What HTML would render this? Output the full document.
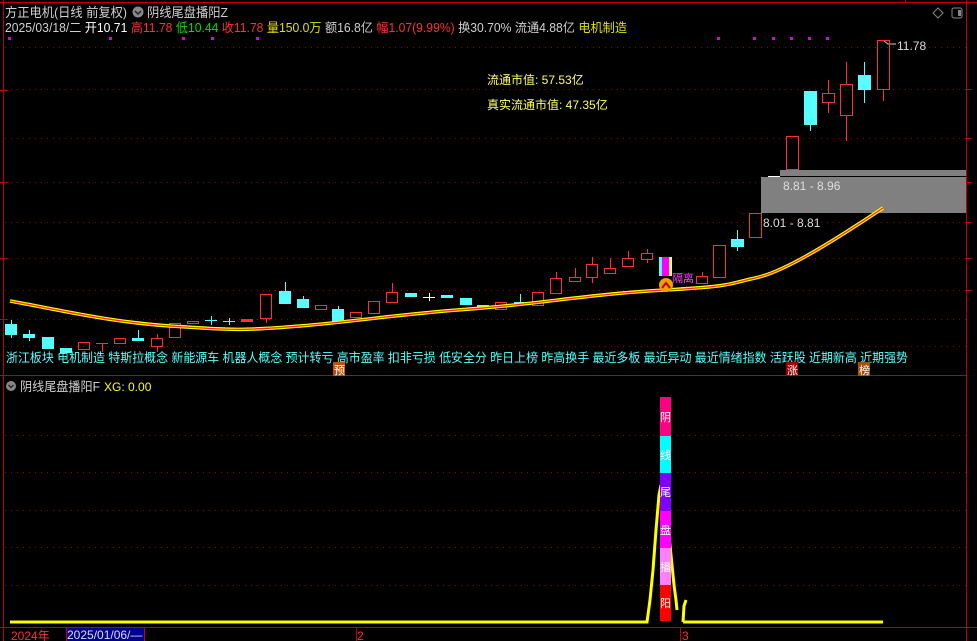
<!DOCTYPE html>
<html><head><meta charset="utf-8"><style>
html,body{margin:0;padding:0;background:#000;width:977px;height:641px;overflow:hidden}
svg{display:block}
text{font-family:"Liberation Sans","Noto Sans CJK SC",sans-serif}
</style></head><body>
<svg width="977" height="641" xmlns="http://www.w3.org/2000/svg">
<g stroke="#c00000" stroke-width="1">
<line x1="3.5" y1="0" x2="3.5" y2="641"/>
<line x1="966.5" y1="0" x2="966.5" y2="641"/>
<line x1="0" y1="2.5" x2="977" y2="2.5"/>
<line x1="905.5" y1="0" x2="905.5" y2="3"/>
<line x1="0" y1="375.5" x2="966" y2="375.5"/>
<line x1="0" y1="627.5" x2="977" y2="627.5"/>
<line x1="356.5" y1="627" x2="356.5" y2="641"/>
<line x1="680.5" y1="627" x2="680.5" y2="641"/>
</g>
<g stroke="#a00000" stroke-dasharray="1 5" stroke-width="1">
<line x1="5" y1="47.5" x2="966" y2="47.5"/>
<line x1="5" y1="89.5" x2="966" y2="89.5"/>
<line x1="5" y1="138.5" x2="966" y2="138.5"/>
<line x1="5" y1="182.5" x2="966" y2="182.5"/>
<line x1="5" y1="222.5" x2="966" y2="222.5"/>
<line x1="5" y1="258.5" x2="966" y2="258.5"/>
<line x1="5" y1="290.5" x2="966" y2="290.5"/>
<line x1="5" y1="319.5" x2="966" y2="319.5"/>
<line x1="5" y1="346.5" x2="966" y2="346.5"/>
<line x1="5" y1="435.5" x2="966" y2="435.5"/>
<line x1="5" y1="472.5" x2="966" y2="472.5"/>
<line x1="5" y1="510.5" x2="966" y2="510.5"/>
<line x1="5" y1="547.5" x2="966" y2="547.5"/>
<line x1="5" y1="585.5" x2="966" y2="585.5"/>
</g>
<g stroke="#c00000"><line x1="0" y1="90.5" x2="8" y2="90.5"/><line x1="0" y1="182.5" x2="8" y2="182.5"/><line x1="0" y1="258.5" x2="8" y2="258.5"/><line x1="0" y1="319.5" x2="8" y2="319.5"/>
<line x1="966" y1="89.5" x2="972" y2="89.5"/><line x1="966" y1="138.5" x2="972" y2="138.5"/><line x1="966" y1="182.5" x2="972" y2="182.5"/><line x1="966" y1="222.5" x2="972" y2="222.5"/><line x1="966" y1="258.5" x2="972" y2="258.5"/><line x1="966" y1="290.5" x2="972" y2="290.5"/></g>
<!-- header -->
<text x="5" y="17" font-size="13" fill="#d0d0d0" textLength="122" lengthAdjust="spacingAndGlyphs">方正电机(日线 前复权)</text>
<circle cx="138" cy="12" r="5.5" fill="#888"/><path d="M135 11l3 3 3-3" stroke="#222" fill="none" stroke-width="1.5"/>
<text x="147" y="17" font-size="13" fill="#d0d0d0" textLength="81" lengthAdjust="spacingAndGlyphs">阴线尾盘播阳Z</text>
<text x="5" y="32" font-size="12.5" textLength="622" lengthAdjust="spacingAndGlyphs"><tspan fill="#d0d0d0">2025/03/18/二 </tspan><tspan fill="#fff">开10.71 </tspan><tspan fill="#ff3030">高11.78 </tspan><tspan fill="#00e000">低10.44 </tspan><tspan fill="#ff3030">收11.78 </tspan><tspan fill="#e0e000">量150.0万 </tspan><tspan fill="#d0d0d0">额16.8亿 </tspan><tspan fill="#ff3030">幅1.07(9.99%) </tspan><tspan fill="#d0d0d0">换30.70% 流通4.88亿 </tspan><tspan fill="#e0e000">电机制造</tspan></text>
<path d="M938 8l5 5-5 5-5-5z" stroke="#888" fill="none"/>
<rect x="952" y="8" width="10" height="10" rx="2" stroke="#888" fill="none"/><rect x="958" y="10" width="3" height="6" fill="#888"/>
<g fill="#e000e0"><rect x="8" y="37" width="3" height="3"/><rect x="109" y="37" width="3" height="3"/><rect x="182" y="37" width="3" height="3"/><rect x="211" y="37" width="3" height="3"/><rect x="256" y="37" width="3" height="3"/><rect x="717" y="37" width="3" height="3"/><rect x="753" y="37" width="3" height="3"/><rect x="772" y="37" width="3" height="3"/><rect x="790" y="37" width="3" height="3"/><rect x="808" y="37" width="3" height="3"/><rect x="826" y="37" width="3" height="3"/></g>
<text x="487" y="84" font-size="12" fill="#ffff60">流通市值: 57.53亿</text>
<text x="487" y="109" font-size="12" fill="#ffff60">真实流通市值: 47.35亿</text>
<!-- gray boxes -->
<rect x="780" y="170" width="186" height="6" fill="#808080"/>
<rect x="761" y="177" width="205" height="36" fill="#808080"/>
<line x1="768" y1="176.5" x2="780" y2="176.5" stroke="#fff"/>
<text x="783" y="190" font-size="12" fill="#ddd">8.81 - 8.96</text>
<text x="763" y="227" font-size="12" fill="#ddd">8.01 - 8.81</text>
<text x="897" y="50" font-size="12" fill="#ddd">11.78</text>
<path d="M884 41l4 3h8" stroke="#ccc" fill="none"/>
<!-- candles -->
<g stroke="#ff3030" fill="none" stroke-width="1">
<rect x="78.5" y="342.5" width="11" height="7"/>
<line x1="96" y1="343.5" x2="108" y2="343.5"/><line x1="102.5" y1="343" x2="102.5" y2="352"/>
<rect x="114.5" y="338.5" width="11" height="5"/>
<rect x="151.5" y="338.5" width="11" height="8"/><line x1="157.5" y1="334" x2="157.5" y2="338"/><line x1="157.5" y1="347" x2="157.5" y2="352"/>
<rect x="169.5" y="323.5" width="11" height="14"/>
<rect x="187.5" y="321.5" width="11" height="2"/>
<rect x="241.5" y="319.5" width="11" height="2" fill="#ff3030"/>
<rect x="260.5" y="294.5" width="11" height="24"/><line x1="266.5" y1="319" x2="266.5" y2="323"/>
<rect x="315.5" y="305.5" width="11" height="4"/>
<rect x="350.5" y="312.5" width="11" height="5"/>
<rect x="368.5" y="301.5" width="11" height="12"/>
<rect x="386.5" y="292.5" width="11" height="10"/><line x1="392.5" y1="283" x2="392.5" y2="292"/>
<rect x="495.5" y="302.5" width="11" height="7"/>
<rect x="532.5" y="292.5" width="11" height="13"/>
<rect x="550.5" y="278.5" width="11" height="15"/><line x1="556.5" y1="272" x2="556.5" y2="278"/>
<rect x="569.5" y="277.5" width="11" height="4"/><line x1="575.5" y1="268" x2="575.5" y2="277"/>
<rect x="586.5" y="264.5" width="11" height="13"/><line x1="592.5" y1="257" x2="592.5" y2="264"/><line x1="592.5" y1="278" x2="592.5" y2="283"/>
<rect x="604.5" y="268.5" width="11" height="5"/><line x1="610.5" y1="258" x2="610.5" y2="268"/>
<rect x="622.5" y="258.5" width="11" height="8"/><line x1="628.5" y1="251" x2="628.5" y2="258"/>
<rect x="641.5" y="253.5" width="11" height="6"/><line x1="647.5" y1="249" x2="647.5" y2="253"/><line x1="647.5" y1="260" x2="647.5" y2="263"/>
<rect x="696.5" y="276.5" width="11" height="7"/><line x1="702.5" y1="272" x2="702.5" y2="276"/>
<rect x="713.5" y="245.5" width="12" height="32"/>
<rect x="749.5" y="213.5" width="12" height="24"/>
<rect x="786.5" y="136.5" width="12" height="33"/>
<rect x="822.5" y="93.5" width="12" height="9"/><line x1="828.5" y1="80" x2="828.5" y2="93"/><line x1="828.5" y1="103" x2="828.5" y2="113"/>
<rect x="840.5" y="84.5" width="12" height="31"/><line x1="846.5" y1="62" x2="846.5" y2="84"/><line x1="846.5" y1="116" x2="846.5" y2="141"/>
<rect x="877.5" y="40.5" width="12" height="49"/><line x1="883.5" y1="90" x2="883.5" y2="101"/>
</g>
<g fill="#55ffff" stroke="#55ffff">
<rect x="5.5" y="324.5" width="11" height="10"/><line x1="11.5" y1="320" x2="11.5" y2="338"/>
<rect x="23.5" y="334.5" width="11" height="3"/><line x1="29.5" y1="330" x2="29.5" y2="341"/>
<rect x="42.5" y="337.5" width="11" height="11"/>
<rect x="60.5" y="348.5" width="11" height="4"/>
<rect x="132.5" y="338.5" width="11" height="2"/><line x1="138.5" y1="330" x2="138.5" y2="338"/>
<line x1="205" y1="320.5" x2="217" y2="320.5"/><line x1="211.5" y1="316" x2="211.5" y2="325"/>
<line x1="223" y1="321.5" x2="235" y2="321.5"/><line x1="229.5" y1="318" x2="229.5" y2="325"/>
<rect x="279.5" y="291.5" width="11" height="12"/><line x1="285.5" y1="282" x2="285.5" y2="291"/>
<rect x="297.5" y="299.5" width="11" height="8"/><line x1="303.5" y1="296" x2="303.5" y2="299"/>
<rect x="332.5" y="309.5" width="11" height="12"/><line x1="338.5" y1="306" x2="338.5" y2="309"/>
<rect x="405.5" y="293.5" width="11" height="3"/>
<rect x="441.5" y="295.5" width="11" height="2"/>
<rect x="460.5" y="298.5" width="11" height="6"/>
<rect x="477.5" y="305.5" width="11" height="3"/>
<rect x="514.5" y="302.5" width="11" height="2"/><line x1="520.5" y1="294" x2="520.5" y2="302"/>
<rect x="731.5" y="239.5" width="12" height="7"/><line x1="737.5" y1="230" x2="737.5" y2="251"/>
<rect x="804.5" y="91.5" width="12" height="33"/><line x1="810.5" y1="125" x2="810.5" y2="131"/>
<rect x="858.5" y="75.5" width="12" height="14"/><line x1="864.5" y1="62" x2="864.5" y2="103"/>
</g>
<g stroke="#fff"><line x1="423" y1="297.5" x2="435" y2="297.5"/><line x1="429.5" y1="293" x2="429.5" y2="301"/></g>
<!-- special stripe -->
<rect x="659" y="257" width="3" height="19" fill="#55ffff"/><rect x="662" y="257" width="7" height="19" fill="#ff00ff"/><rect x="669" y="257" width="3" height="19" fill="#ffff60"/>
<text x="672" y="282" font-size="11" fill="#ff40ff">隔离</text>
<!-- MA -->
<path d="M10 301 C60 310 110 322 170 326 S240 331 300 326 S400 314 470 309 S590 294 665 290 S730 283 755 278 S820 250 883 208" stroke="#ffff00" stroke-width="3.5" fill="none"/>
<path d="M10 301 C60 310 110 322 170 326 S240 331 300 326 S400 314 470 309 S590 294 665 290 S730 283 755 278 S820 250 883 208" stroke="#ff2020" stroke-width="1.2" fill="none"/>
<circle cx="666" cy="285" r="7" fill="#f0a000"/><path d="M662 288l4-5 4 5" stroke="#c00000" stroke-width="2" fill="none"/>
<!-- tags -->
<text x="6" y="362" font-size="12.5" fill="#55ffff" textLength="902" lengthAdjust="spacingAndGlyphs">浙江板块 电机制造 特斯拉概念 新能源车 机器人概念 预计转亏 高市盈率 扣非亏损 低安全分 昨日上榜 昨高换手 最近多板 最近异动 最近情绪指数 活跃股 近期新高 近期强势</text>
<rect x="333" y="362" width="12" height="14" fill="#c05000"/><text x="334" y="374" font-size="11" fill="#fff">预</text>
<rect x="786" y="362" width="12" height="14" fill="#a00000"/><text x="787" y="374" font-size="11" fill="#fff">涨</text>
<rect x="858" y="362" width="12" height="14" fill="#a05000"/><text x="859" y="374" font-size="11" fill="#fff">榜</text>
<!-- lower panel -->
<circle cx="11" cy="386" r="5" fill="#888"/><path d="M8.5 385l2.5 2.5 2.5-2.5" stroke="#222" fill="none" stroke-width="1.3"/>
<text x="20" y="391" font-size="12.5" fill="#d0d0d0" textLength="80" lengthAdjust="spacingAndGlyphs">阴线尾盘播阳F</text>
<text x="104" y="391" font-size="12" fill="#ffff00">XG: 0.00</text>
<path d="M10 622 H647 L650 600 L653 570 L656 530 L659 495 L661 485 L664 495 L667 520 L670 545 L672 565 L674 585 L676 600 L677 610 M683 622 L684 606 L686 600 M683 622 H883" stroke="#ffff00" stroke-width="3" fill="none"/>
<rect x="660" y="397" width="11" height="39" fill="#ff0080"/>
<rect x="660" y="436" width="11" height="37" fill="#00ffff"/>
<rect x="660" y="473" width="11" height="38" fill="#8000ff"/>
<rect x="660" y="511" width="11" height="37" fill="#ff00ff"/>
<rect x="660" y="548" width="11" height="37" fill="#ff80ff"/>
<rect x="660" y="585" width="11" height="36" fill="#ff0000"/>
<g font-size="11" fill="#fff"><text x="660" y="421">阴</text><text x="660" y="459">线</text><text x="660" y="496">尾</text><text x="660" y="534">盘</text><text x="660" y="571">播</text><text x="660" y="607">阳</text></g>
<!-- axis -->
<text x="11" y="640" font-size="12" fill="#ff3030">2024年</text>
<rect x="66" y="628" width="78" height="13" fill="#000090"/>
<line x1="66.5" y1="627" x2="66.5" y2="641" stroke="#c00000"/><line x1="144.5" y1="627" x2="144.5" y2="641" stroke="#c00000"/>
<text x="67" y="639" font-size="12" fill="#ddd">2025/01/06/—</text>
<text x="357" y="640" font-size="12" fill="#ff3030">2</text>
<text x="682" y="640" font-size="12" fill="#ff3030">3</text>
</svg>
</body></html>
